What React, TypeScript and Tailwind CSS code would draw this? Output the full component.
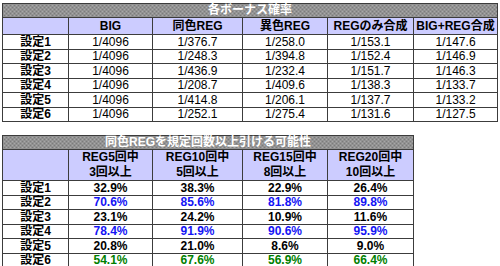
const bonus = [
  ["設定1", "1/4096", "1/376.7", "1/258.0", "1/153.1", "1/147.6"],
  ["設定2", "1/4096", "1/248.3", "1/394.8", "1/152.4", "1/146.9"],
  ["設定3", "1/4096", "1/436.9", "1/232.4", "1/151.7", "1/146.3"],
  ["設定4", "1/4096", "1/208.7", "1/409.6", "1/138.3", "1/133.7"],
  ["設定5", "1/4096", "1/414.8", "1/206.1", "1/137.7", "1/133.2"],
  ["設定6", "1/4096", "1/252.1", "1/275.4", "1/131.6", "1/127.5"],
];

const chance = [
  { label: "設定1", color: "text-black", vals: ["32.9%", "38.3%", "22.9%", "26.4%"] },
  { label: "設定2", color: "text-[#1414f5]", vals: ["70.6%", "85.6%", "81.8%", "89.8%"] },
  { label: "設定3", color: "text-black", vals: ["23.1%", "24.2%", "10.9%", "11.6%"] },
  { label: "設定4", color: "text-[#1414f5]", vals: ["78.4%", "91.9%", "90.6%", "95.9%"] },
  { label: "設定5", color: "text-black", vals: ["20.8%", "21.0%", "8.6%", "9.0%"] },
  { label: "設定6", color: "text-[#008000]", vals: ["54.1%", "67.6%", "56.9%", "66.4%"] },
];

const cell = "border border-[#3c3c3c] p-0 text-center align-middle leading-[13px]";
const title =
  "border border-[#3c3c3c] p-0 text-center text-white font-bold h-[14px] leading-[13px] bg-[#999] bg-[image:repeating-conic-gradient(#7c7c7c_0%_25%,#a8a8a8_0%_50%)] bg-[length:4px_4px]";

const Cols = ({ last }: { last: boolean }) => (
  <colgroup>
    <col className="w-[66px]" />
    <col className="w-[84px]" />
    <col className="w-[90px]" />
    <col className="w-[85px]" />
    <col className="w-[86px]" />
    {last && <col className="w-[84px]" />}
  </colgroup>
);

export default function App() {
  return (
    <div className="w-[500px] h-[266px] overflow-hidden bg-white pl-[2px] pt-[3px] text-[12px] text-black font-['Liberation_Sans','Noto_Sans_CJK_JP',sans-serif]">
      <table className="table-fixed border-collapse border border-[#808080] w-[495px]">
        <Cols last />
        <tbody>
          <tr>
            <td colSpan={6} className={title}>各ボーナス確率</td>
          </tr>
          <tr className="bg-[#ccccff] font-bold h-[17px]">
            <td className={cell}></td>
            <td className={cell}>BIG</td>
            <td className={cell}>同色REG</td>
            <td className={cell}>異色REG</td>
            <td className={cell}>REGのみ合成</td>
            <td className={cell}>BIG+REG合成</td>
          </tr>
          {bonus.map((r, i) => (
            <tr key={r[0]} className={i % 2 === 0 ? "h-[15px]" : "h-[14px]"}>
              {r.map((v, j) => (
                <td key={j} className={`${cell} ${j === 0 ? "font-bold" : ""}`}>{v}</td>
              ))}
            </tr>
          ))}
        </tbody>
      </table>

      <table className="mt-[13px] table-fixed border-collapse border border-[#808080] w-[411px]">
        <Cols last={false} />
        <tbody>
          <tr>
            <td colSpan={5} className={title}>同色REGを規定回数以上引ける可能性</td>
          </tr>
          <tr className="bg-[#ccccff] font-bold h-[31px]">
            <td className={cell}></td>
            <td className={`${cell} leading-[15px]`}>REG5回中<br />3回以上</td>
            <td className={`${cell} leading-[15px]`}>REG10回中<br />5回以上</td>
            <td className={`${cell} leading-[15px]`}>REG15回中<br />8回以上</td>
            <td className={`${cell} leading-[15px]`}>REG20回中<br />10回以上</td>
          </tr>
          {chance.map((r, i) => (
            <tr key={r.label} className={i % 2 === 0 ? "h-[15px]" : "h-[14px]"}>
              <td className={`${cell} font-bold`}>{r.label}</td>
              {r.vals.map((v) => (
                <td key={v} className={`${cell} font-bold ${r.color}`}>{v}</td>
              ))}
            </tr>
          ))}
        </tbody>
      </table>
    </div>
  );
}
